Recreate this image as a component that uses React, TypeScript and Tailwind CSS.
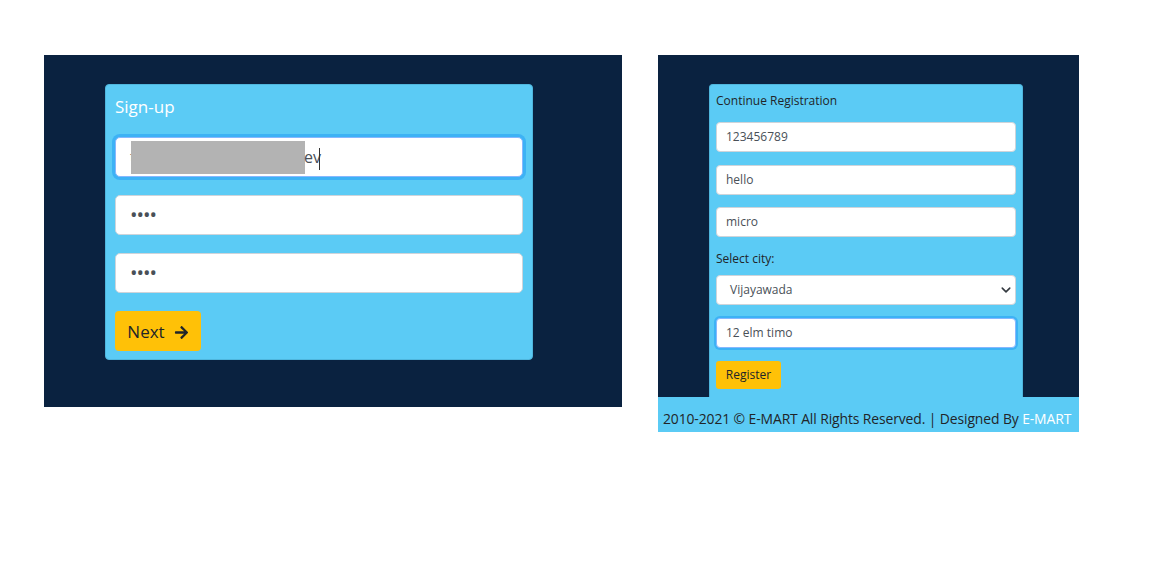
import React from 'react';
import { FaArrowRight } from 'react-icons/fa';

const font = { fontFamily: '"Open Sans", "Noto Sans", sans-serif' };

export default function App() {
  return (
    <div className="min-h-screen bg-white" style={font}>
      <div className="flex items-start gap-[36px] pl-[44px] pt-[55px]">
        {/* Sign-up panel */}
        <div className="w-[578px] h-[352px] bg-[#0a2240] pl-[61px] pt-[29px]">
          <div className="w-[428px] h-[276px] bg-[#5bcbf5] rounded-[4px] border border-[#4fb6dd] px-[9px] pt-[10px]">
            <h2 className="text-white text-[17px] leading-[24px] mb-[18px]">Sign-up</h2>

            <div className="relative h-[40px] rounded-[5px] bg-white border border-[#86b7fe] ring-[3px] ring-[#3db2f5] flex items-center px-[14px]">
              <span className="text-[#555] text-[16px]">t</span>
              <div className="absolute left-[15px] top-[3px] w-[174px] h-[33px] bg-[#b3b3b3]" />
              <span className="absolute left-[188px] text-[#495057] text-[16px]">ev</span>
              <span className="absolute left-[203px] top-[10px] w-px h-[22px] bg-[#333]" />
            </div>

            <div className="mt-[18px] h-[40px] rounded-[5px] bg-white border border-[#ced4da] flex items-center px-[14px]">
              <span className="text-[#495057] text-[20px] leading-none tracking-[-1px]">••••</span>
            </div>

            <div className="mt-[18px] h-[40px] rounded-[5px] bg-white border border-[#ced4da] flex items-center px-[14px]">
              <span className="text-[#495057] text-[20px] leading-none tracking-[-1px]">••••</span>
            </div>

            <button className="mt-[18px] h-[40px] w-[86px] rounded-[4px] bg-[#ffc107] flex items-center justify-center gap-[9px] text-[#212529] text-[17px] pt-[2px]">
              Next <FaArrowRight className="w-[15px] h-[15px]" />
            </button>
          </div>
        </div>

        {/* Registration panel */}
        <div className="w-[421px]">
          <div className="h-[342px] bg-[#0a2240] pl-[51px] pt-[29px]">
            <div className="w-[314px] h-[313px] bg-[#5bcbf5] rounded-t-[4px] border border-b-0 border-[#4fb6dd] px-[6px] pt-[8px] text-[12px] text-[#212529]">
              <p className="leading-[16px]">Continue Registration</p>

              <div className="mt-[13px] h-[30px] rounded-[4px] bg-white border border-[#ced4da] flex items-center px-[9px] text-[#495057]">123456789</div>
              <div className="mt-[13px] h-[30px] rounded-[4px] bg-white border border-[#ced4da] flex items-center px-[9px] text-[#495057]">hello</div>
              <div className="mt-[12px] h-[30px] rounded-[4px] bg-white border border-[#ced4da] flex items-center px-[9px] text-[#495057]">micro</div>

              <p className="mt-[14px] leading-[16px]">Select city:</p>

              <div className="mt-[8px] h-[30px] rounded-[4px] bg-white border border-[#ced4da] flex items-center justify-between pl-[13px] pr-[4px] text-[#495057]">
                <span>Vijayawada</span>
                <svg width="10" height="10" viewBox="0 0 16 16" fill="none" stroke="#343a40" strokeWidth="2.5" strokeLinecap="round" strokeLinejoin="round">
                  <path d="M2 5l6 6 6-6" />
                </svg>
              </div>

              <div className="mt-[13px] h-[30px] rounded-[4px] bg-white border border-[#86b7fe] ring-[2px] ring-[#3db2f5] flex items-center px-[9px] text-[#495057]">12 elm timo</div>

              <button className="mt-[13px] h-[28px] w-[65px] rounded-[3px] bg-[#ffc107] text-[#212529] text-[12px]">Register</button>
            </div>
          </div>
          <div className="h-[35px] bg-[#5bcbf5] flex items-center pl-[5px] pt-[10px] text-[13.9px] tracking-[-0.1px] text-[#212529] whitespace-nowrap">
            2010-2021 © E-MART All Rights Reserved. | Designed By&nbsp;<span className="text-white">E-MART</span>
          </div>
        </div>
      </div>
    </div>
  );
}
